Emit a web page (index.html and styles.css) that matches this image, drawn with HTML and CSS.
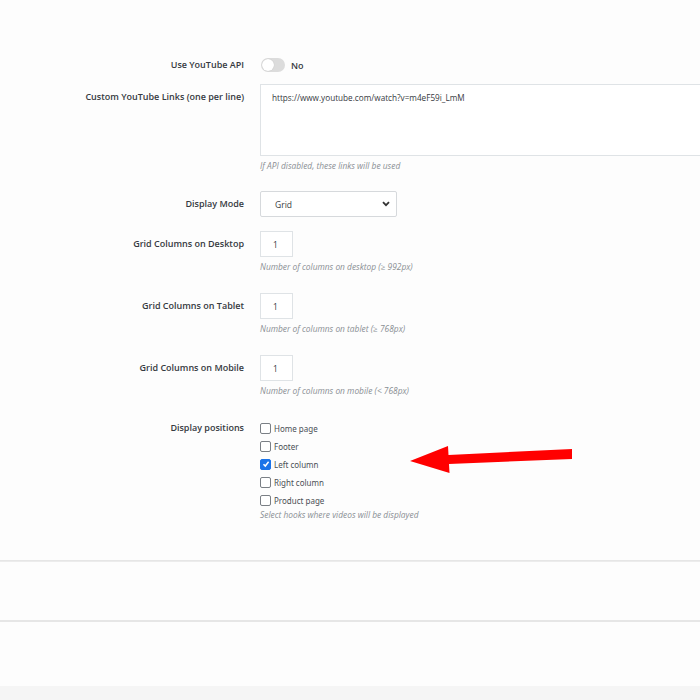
FILE: index.html
```html
<!DOCTYPE html>
<html>
<head>
<meta charset="utf-8">
<link rel="stylesheet" href="styles.css">
</head>
<body>
<div class="page">
  <form class="form">
    <div class="row row-toggle">
      <div class="label">Use YouTube API</div>
      <div class="control toggle-wrap">
        <span class="toggle"><span class="knob"></span></span>
        <span class="toggle-text">No</span>
      </div>
    </div>

    <div class="row">
      <div class="label">Custom YouTube Links (one per line)</div>
      <div class="control">
        <div class="textarea">https://www.youtube.com/watch?v=m4eF59i_LmM</div>
        <div class="help">If API disabled, these links will be used</div>
      </div>
    </div>

    <div class="row row-select">
      <div class="label">Display Mode</div>
      <div class="control">
        <div class="select">
          <span>Grid</span>
          <svg class="chev" width="8" height="6" viewBox="0 0 8 6"><path d="M1 1.2 L4 4.2 L7 1.2" fill="none" stroke="#333" stroke-width="1.8"/></svg>
        </div>
      </div>
    </div>

    <div class="row row-num">
      <div class="label">Grid Columns on Desktop</div>
      <div class="control">
        <div class="num">1</div>
        <div class="help">Number of columns on desktop (≥ 992px)</div>
      </div>
    </div>

    <div class="row row-num">
      <div class="label">Grid Columns on Tablet</div>
      <div class="control">
        <div class="num">1</div>
        <div class="help">Number of columns on tablet (≥ 768px)</div>
      </div>
    </div>

    <div class="row row-num">
      <div class="label">Grid Columns on Mobile</div>
      <div class="control">
        <div class="num">1</div>
        <div class="help">Number of columns on mobile (&lt; 768px)</div>
      </div>
    </div>

    <div class="row row-checks">
      <div class="label">Display positions</div>
      <div class="control">
        <div class="check"><span class="box"></span>Home page</div>
        <div class="check"><span class="box"></span>Footer</div>
        <div class="check"><span class="box checked"><svg width="8" height="8" viewBox="0 0 8 8"><path d="M1.5 4.2 L3.3 6 L6.6 1.8" fill="none" stroke="#fff" stroke-width="1.5"/></svg></span>Left column</div>
        <div class="check"><span class="box"></span>Right column</div>
        <div class="check"><span class="box"></span>Product page</div>
        <div class="help help-checks">Select hooks where videos will be displayed</div>
      </div>
    </div>
  </form>

  <div class="panel-footer"></div>
  <div class="panel-empty"></div>
  <div class="bottom-band"></div>

  <svg class="arrow" width="700" height="700" viewBox="0 0 700 700">
    <polygon points="410,461 448,446 448.5,455 572,449 572,459 449,464 449.5,473" fill="#ff0000"/>
  </svg>
</div>
</body>
</html>
```

FILE: styles.css
```css
html, body {
  margin: 0;
  padding: 0;
  background: #fdfdfd;
}
body {
  font-family: "Open Sans", "Noto Sans", sans-serif;
  color: #363a41;
  overflow: hidden;
  width: 700px;
  height: 700px;
}
.page {
  position: relative;
  width: 700px;
  height: 700px;
  overflow: hidden;
}
.form {
  padding-top: 58px;
  display: flex;
  flex-direction: column;
}
.row {
  display: grid;
  grid-template-columns: 244px 1fr;
  column-gap: 16px;
  margin-bottom: 20px;
}
.label {
  text-align: right;
  font-size: 9px;
  font-weight: 600;
  line-height: 12px;
  padding-top: 7px;
  color: #363a41;
  white-space: nowrap;
}
.row-toggle {
  margin-bottom: 12px;
}
.row-toggle .label {
  padding-top: 1px;
}
.toggle-wrap {
  display: flex;
  align-items: center;
  gap: 6px;
  height: 14px;
}
.toggle {
  width: 24px;
  height: 14px;
  border-radius: 7px;
  background: #dcdcdc;
  position: relative;
  display: inline-block;
  margin-left: 1px;
}
.knob {
  position: absolute;
  left: 1px;
  top: 1px;
  width: 12px;
  height: 12px;
  border-radius: 50%;
  background: #fff;
  box-shadow: 0 0 1px rgba(0,0,0,0.2);
}
.toggle-text {
  font-size: 9px;
  font-weight: 600;
  color: #363a41;
}
.control {
  min-width: 0;
}
.textarea {
  width: 480px;
  height: 72px;
  box-sizing: border-box;
  border: 1px solid #dfe3e6;
  background: #fff;
  padding: 7px 11px;
  font-size: 8.2px;
  line-height: 11px;
  color: #363a41;
}
.help {
  font-size: 8.4px;
  font-style: italic;
  color: #8a8f94;
  line-height: 10px;
  margin-top: 5px;
}
.select {
  width: 137px;
  height: 26px;
  box-sizing: border-box;
  border: 1px solid #d6d9dc;
  border-radius: 2px;
  background: #fff;
  display: flex;
  align-items: center;
  justify-content: space-between;
  padding: 0 6px 0 14px;
  font-size: 8.5px;
  color: #363a41;
}
.row-select {
  margin-bottom: 14px;
}
.row-num {
  margin-bottom: 21px;
}
.num {
  width: 33px;
  height: 26px;
  box-sizing: border-box;
  border: 1px solid #dfe3e6;
  background: #fff;
  display: flex;
  align-items: center;
  padding-left: 12px;
  font-size: 8.5px;
  color: #363a41;
}
.row-checks {
  margin-top: 3px;
}
.row-checks .label {
  padding-top: 2px;
}
.check {
  display: flex;
  align-items: center;
  height: 18px;
  margin-top: -1px;
  font-family: "Noto Sans", "Open Sans", sans-serif;
  font-size: 8px;
  color: #4a4f55;
}
.check + .check {
  margin-top: 0;
}
.box {
  width: 9px;
  height: 9px;
  border: 1px solid #7a7f85;
  border-radius: 2px;
  background: #fff;
  margin-right: 3px;
  margin-left: 0;
  display: inline-flex;
  align-items: center;
  justify-content: center;
}
.box.checked {
  background: #1a73e8;
  border-color: #1a73e8;
}
.help-checks {
  margin-top: 1px;
}
.panel-footer {
  height: 0;
  border-top: 1px solid #e6e6e6;
  border-bottom: 1px solid #ececec;
  margin-top: 20px;
}
.panel-empty {
  height: 58px;
  border-bottom: 2px solid #e6e6e6;
}
.bottom-band {
  margin-top: 64px;
  height: 40px;
  background: #f5f5f5;
}
.arrow {
  position: absolute;
  left: 0;
  top: 0;
  pointer-events: none;
}
```
